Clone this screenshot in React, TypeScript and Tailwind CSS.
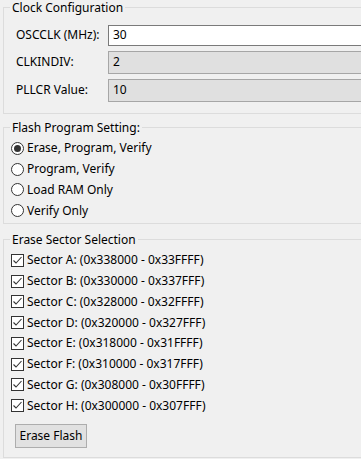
import React from 'react'

const sectors = [
  ['A', '0x338000', '0x33FFFF'],
  ['B', '0x330000', '0x337FFF'],
  ['C', '0x328000', '0x32FFFF'],
  ['D', '0x320000', '0x327FFF'],
  ['E', '0x318000', '0x31FFFF'],
  ['F', '0x310000', '0x317FFF'],
  ['G', '0x308000', '0x30FFFF'],
  ['H', '0x300000', '0x307FFF'],
]

const modes = ['Erase, Program, Verify', 'Program, Verify', 'Load RAM Only', 'Verify Only']

function Radio({ checked }: { checked?: boolean }) {
  return (
    <span className="flex h-[13px] w-[13px] items-center justify-center rounded-full border border-[#333333] bg-white">
      {checked && <span className="h-[7px] w-[7px] rounded-full bg-[#333333]" />}
    </span>
  )
}

function Check() {
  return (
    <span className="flex h-[13px] w-[13px] items-center justify-center border border-[#333333] bg-white">
      <svg width="11" height="11" viewBox="0 0 11 11">
        <polyline points="1.5,5.5 4,8 9.5,2" fill="none" stroke="#333333" strokeWidth="1.1" />
      </svg>
    </span>
  )
}

export default function App() {
  return (
    <div className="h-[459px] w-[361px] overflow-hidden bg-[#f0f0f0] font-['Noto_Sans',sans-serif] text-[12px] leading-[14px] text-black">
      {/* Clock Configuration */}
      <fieldset className="ml-[3px] w-[400px] border border-[#dcdcdc] pt-[9.8px] pb-[11px]">
        <legend className="ml-[6px] px-[2px] pt-[1.2px] leading-[14px]">Clock Configuration</legend>
        <div className="flex flex-col gap-[5px]">
          <div className="flex h-[21px] items-center">
            <span className="w-[104px] pl-[12px]">OSCCLK (MHz):</span>
            <span className="flex h-full flex-1 items-center border border-[#7a7a7a] bg-white pl-[4px]">30</span>
          </div>
          <div className="flex h-[23px] items-center">
            <span className="w-[104px] pl-[12px]">CLKINDIV:</span>
            <span className="flex h-full flex-1 items-center border border-[#a6a6a6] bg-[#e0e0e0] pl-[4px]">2</span>
          </div>
          <div className="flex h-[23px] items-center">
            <span className="w-[104px] pl-[12px]">PLLCR Value:</span>
            <span className="flex h-full flex-1 items-center border border-[#a6a6a6] bg-[#e0e0e0] pl-[4px]">10</span>
          </div>
        </div>
      </fieldset>

      {/* Flash Program Setting */}
      <fieldset className="mt-[7px] ml-[3px] w-[400px] border border-[#dcdcdc] pt-[3px] pb-[2px]">
        <legend className="ml-[6px] px-[2px] leading-[14px]">Flash Program Setting:</legend>
        {modes.map((m, i) => (
          <div key={m} className="flex h-[20.75px] items-center gap-[3px] pl-[7px]">
            <Radio checked={i === 0} />
            <span>{m}</span>
          </div>
        ))}
      </fieldset>

      {/* Erase Sector Selection */}
      <fieldset className="mt-[9px] ml-[3px] w-[400px] border border-[#dcdcdc] pt-[3px] pb-[9px]">
        <legend className="ml-[6px] px-[2px] leading-[14px]">Erase Sector Selection</legend>
        {sectors.map(([n, a, b]) => (
          <div key={n} className="flex h-[20.75px] items-center gap-[3px] pl-[7px]">
            <Check />
            <span>
              Sector {n}: ({a} - {b})
            </span>
          </div>
        ))}
        <button className="mt-[8px] ml-[11px] flex h-[24px] w-[72px] items-center justify-center border border-[#adadad] bg-[#e1e1e1]">
          Erase Flash
        </button>
      </fieldset>
    </div>
  )
}
